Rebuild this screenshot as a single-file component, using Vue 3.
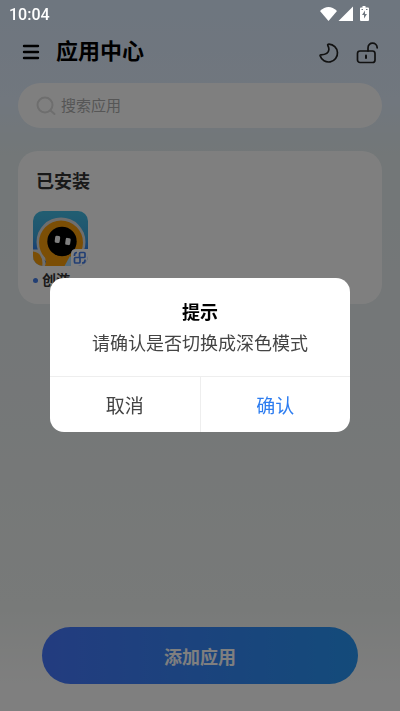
<script setup>
import { ref } from 'vue'

const query = ref('')
const confirming = ref(true)
const apps = [{ name: '创游' }]
</script>

<template>
  <div class="screen">
    <div class="status">
      <span class="clock">10:04</span>
      <svg class="status-icons" viewBox="0 0 52 18" aria-hidden="true">
        <path d="M1 6Q9.500 -2 18 6L9.500 16Z" />
        <path d="M34 1.500V16H19.500Z" />
        <path d="M43.500 1H46.500V2.500H49Q50 2.500 50 3.500V15Q50 16 49 16H42Q41 16 41 15V3.500Q41 2.500 42 2.500H43.500Z" />
        <path class="bolt" d="M46 5.500L43 10H45V13.500L48 9H46Z" />
        <path class="bolt-line" d="M42.500 4.500H44M47 4.500H48.500" />
      </svg>
    </div>

    <header class="bar">
      <button class="icon-button" type="button" aria-label="菜单">
        <svg class="menu" viewBox="0 0 18 18"><path d="M2 3H16M2 9H16M2 15H16" /></svg>
      </button>
      <h1>应用中心</h1>
      <div class="tools">
        <button class="icon-button" type="button" aria-label="深色模式" @click="confirming = true">
          <svg class="line-icon" viewBox="0 0 22 22">
            <path d="M11 2.200A8.900 8.900 0 1 1 2.100 13.800Q1.900 12.900 3 12.800Q10.500 12.600 10.900 7.500Q11 5.500 9.800 3.500Q9.200 2.200 11 2.200Z" />
          </svg>
        </button>
        <button class="icon-button" type="button" aria-label="锁定">
          <svg class="line-icon" viewBox="0 0 22 22">
            <rect x="1.500" y="9" width="17.500" height="11.500" rx="2.500" />
            <path d="M12 9V6C12 -0.500 21 -0.500 21.200 6" />
            <path class="keyhole" d="M10 13.500V16" />
          </svg>
        </button>
      </div>
    </header>

    <main class="content">
      <label class="search">
        <svg class="search-icon" viewBox="0 0 20 20"><circle cx="9" cy="9" r="7.500" /><path d="M14.500 14.500L18.500 18" /></svg>
        <input v-model="query" type="text" placeholder="搜索应用" aria-label="搜索应用" />
      </label>

      <section class="card">
        <h2>已安装</h2>
        <div class="apps">
          <button v-for="app in apps" :key="app.name" class="app" type="button">
            <svg class="app-icon" viewBox="0 0 55 55" aria-hidden="true">
              <defs>
                <linearGradient id="sky" x1="0" y1="0" x2="0" y2="1">
                  <stop offset="0" stop-color="#43bce4" />
                  <stop offset="0.450" stop-color="#3da8dd" />
                  <stop offset="0.700" stop-color="#327fe8" />
                </linearGradient>
                <clipPath id="tile"><rect width="55" height="55" rx="10" /></clipPath>
              </defs>
              <g clip-path="url(#tile)">
                <rect width="55" height="55" fill="url(#sky)" />
                <path d="M0 38.500H8L14 56H0Z" fill="#ddd" />
                <circle cx="28" cy="31" r="24.500" fill="#ddd" />
                <circle cx="28" cy="31.500" r="22" fill="#f79d0a" />
                <path d="M9 41Q15 49 11.500 56H36L46 43Z" fill="#f79d0a" />
                <path d="M0 40.500Q5 41 7 44Q10.500 49 9 56H0Z" fill="#f79d0a" />
                <path d="M31 56L37 45L46 56Z" fill="#a9d8fa" />
                <circle cx="29" cy="30.500" r="14.700" fill="#000" />
                <rect x="22" y="25" width="5" height="7" rx="1.500" fill="#fff" transform="rotate(8 25 28)" />
                <rect x="32.500" y="27" width="5" height="7" rx="1.500" fill="#fff" transform="rotate(8 35 30)" />
                <path d="M38 56V43Q38 38 43 38H56V56Z" fill="#fff" />
              </g>
              <g fill="none" stroke="#447ee9" stroke-width="1.700">
                <rect x="46.500" y="41.500" width="5.500" height="5" rx="1" />
                <rect x="41.500" y="46.500" width="5.500" height="5.500" rx="1" />
                <path d="M41.500 45V44Q41.500 41.500 44 41.500M49 52Q52 52 52 49.500V48.500" />
              </g>
            </svg>
            <span class="app-name"><i class="dot"></i>{{ app.name }}</span>
          </button>
        </div>
      </section>
    </main>

    <footer class="footer">
      <button class="add" type="button">添加应用</button>
    </footer>

    <div v-if="confirming" class="mask">
      <div class="dialog" role="dialog" aria-modal="true" aria-labelledby="dialog-title">
        <div class="dialog-body">
          <h3 id="dialog-title">提示</h3>
          <p>请确认是否切换成深色模式</p>
        </div>
        <div class="actions">
          <button type="button" @click="confirming = false">取消</button>
          <button class="primary" type="button" @click="confirming = false">确认</button>
        </div>
      </div>
    </div>
  </div>
</template>

<style>
body {
  margin: 0;
}
</style>

<style scoped>
.screen {
  display: flex;
  flex-direction: column;
  min-height: 100vh;
  box-sizing: border-box;
  background: linear-gradient(180deg, #dcecfe 0%, #e2eefd 14%, #e6eff0 22%, #eaeff0 55%, #f0f4f2 85%, #ffffff 97%);
  font-family: Roboto, "Noto Sans CJK SC", sans-serif;
  color: #000;
}

h1,
h2,
h3,
p {
  margin: 0;
}

button {
  border: 0;
  padding: 0;
  background: none;
  font: inherit;
  color: inherit;
  cursor: pointer;
}

svg {
  display: block;
}

.status {
  position: relative;
  z-index: 2;
  display: flex;
  justify-content: space-between;
  align-items: center;
  height: 28px;
  padding: 0 29px 0 9px;
  color: #fff;
}

.clock {
  font-size: 16px;
  font-weight: 500;
}

.status-icons {
  width: 52px;
  height: 18px;
  fill: #fff;
}

.status-icons .bolt {
  fill: #6f7780;
}

.status-icons .bolt-line {
  stroke: #6f7780;
}

.bar {
  display: flex;
  align-items: center;
  gap: 16px;
  height: 48px;
  padding: 0 22px;
}

h1 {
  flex: 1;
  font-size: 22px;
  line-height: 32px;
  font-weight: 700;
}

.tools {
  display: flex;
  gap: 16px;
  padding-top: 2px;
}

.menu {
  width: 18px;
  height: 18px;
  fill: none;
  stroke: #000;
  stroke-width: 2.4;
  stroke-linecap: round;
}

.line-icon {
  width: 22px;
  height: 22px;
  fill: none;
  stroke: #222;
  stroke-width: 1.7;
  stroke-linecap: round;
  stroke-linejoin: round;
}

.line-icon .keyhole {
  stroke-width: 2;
}

.content {
  flex: 1;
  display: flex;
  flex-direction: column;
  gap: 23px;
  padding: 7px 18px 24px;
}

.search {
  display: flex;
  align-items: center;
  gap: 5px;
  height: 45px;
  padding: 0 18px;
  border-radius: 23px;
  background: #fff;
}

.search-icon {
  width: 20px;
  height: 20px;
  fill: none;
  stroke: #dcdcdc;
  stroke-width: 2;
  stroke-linecap: round;
}

.search input {
  flex: 1;
  min-width: 0;
  border: 0;
  padding: 0;
  outline: 0;
  background: none;
  font: inherit;
  font-size: 15px;
  color: #333;
}

.search input::placeholder {
  color: #acacac;
  opacity: 1;
}

.card {
  padding: 16px 15px 14px;
  border-radius: 20px;
  background: #fff;
}

h2 {
  padding: 0 3px;
  font-size: 18px;
  line-height: 30px;
  font-weight: 700;
  color: #333;
}

.apps {
  display: flex;
  gap: 16px;
  padding-top: 14px;
}

.app {
  display: flex;
  flex-direction: column;
  gap: 4px;
}

.app-icon {
  width: 55px;
  height: 55px;
}

.app-name {
  display: flex;
  align-items: center;
  gap: 4px;
  font-size: 14px;
  line-height: 20px;
  font-weight: 700;
  color: #333;
}

.dot {
  width: 5px;
  height: 5px;
  border-radius: 50%;
  background: #447ee9;
}

.footer {
  padding: 0 42px 27px;
}

.add {
  display: block;
  width: 100%;
  height: 57px;
  border-radius: 29px;
  background: linear-gradient(90deg, #4678ff, #2796f5);
  font-size: 18px;
  font-weight: 700;
  color: #fff;
}

.mask {
  position: fixed;
  inset: 0;
  z-index: 1;
  display: flex;
  align-items: center;
  justify-content: center;
  padding: 0 50px 1px;
  background: rgba(0, 0, 0, 0.5);
}

.dialog {
  flex: 1;
  overflow: hidden;
  max-width: 400px;
  border-radius: 14px;
  background: #fff;
  text-align: center;
}

.dialog-body {
  padding: 20px 16px 17px;
}

h3 {
  font-size: 18px;
  line-height: 30px;
  font-weight: 700;
}

.dialog-body p {
  font-size: 18px;
  line-height: 31px;
  color: #444;
}

.actions {
  display: flex;
  border-top: 1px solid #eee;
}

.actions button {
  flex: 1;
  height: 55px;
  font-size: 19px;
  color: #444;
}

.actions .primary {
  border-left: 1px solid #eee;
  color: #2c7cf0;
}
</style>
